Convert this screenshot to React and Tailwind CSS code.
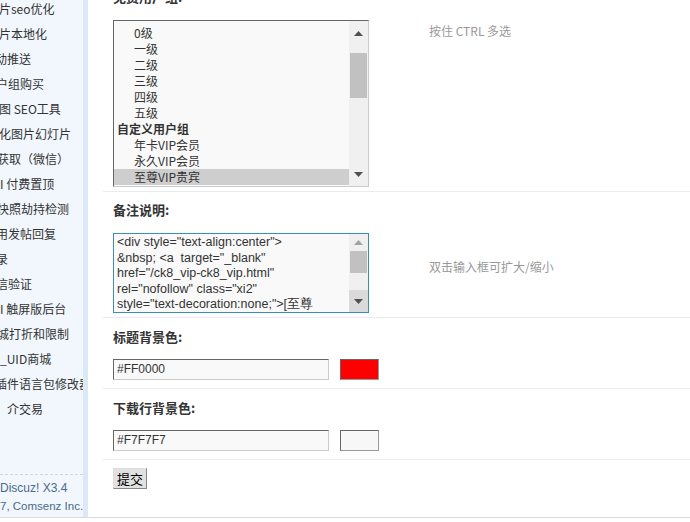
import React from 'react';

const cjk = { fontFamily: '"Noto Sans CJK SC", "Microsoft YaHei", sans-serif' };
const latin = { fontFamily: '"Liberation Sans", Tahoma, Arial, sans-serif' };

const menu = [
  { label: '片seo优化', cls: '-ml-[1px]' },
  { label: '片本地化', cls: '-ml-[1px]' },
  { label: '动推送', cls: '-ml-[5px]' },
  { label: '户组购买', cls: '-ml-[4px]' },
  { label: '图 SEO工具', cls: '-ml-[1px]' },
  { label: '化图片幻灯片', cls: '-ml-[1px]' },
  { label: '获取（微信）', cls: '-ml-[3px]' },
  { label: 'I 付费置顶', cls: 'ml-0' },
  { label: '快照劫持检测', cls: '-ml-[3px]' },
  { label: '用发帖回复', cls: '-ml-[4px]' },
  { label: '录', cls: '-ml-[4px]' },
  { label: '信验证', cls: '-ml-[4px]' },
  { label: 'I 触屏版后台', cls: 'ml-0' },
  { label: '城打折和限制', cls: '-ml-[3px]' },
  { label: '_UID商城', cls: 'ml-0' },
  { label: '插件语言包修改器', cls: '-ml-[5px]' },
  { label: '介交易', cls: 'ml-[7px]' },
];

const levels = ['0级', '一级', '二级', '三级', '四级', '五级'];
const customs = ['年卡VIP会员', '永久VIP会员', '至尊VIP贵宾'];

const noteLines = [
  '<div style="text-align:center">',
  '&nbsp; <a  target="_blank"',
  'href="/ck8_vip-ck8_vip.html"',
  'rel="nofollow" class="xi2"',
  'style="text-decoration:none;">[至尊',
];

const Up = ({ color = '#505050' }) => (
  <svg width="9" height="5" viewBox="0 0 9 5"><path d="M0 5 L4.5 0 L9 5 Z" fill={color} /></svg>
);
const Down = ({ color = '#505050' }) => (
  <svg width="9" height="5" viewBox="0 0 9 5"><path d="M0 0 L9 0 L4.5 5 Z" fill={color} /></svg>
);

const Sidebar = () => (
  <div className="w-[88px] h-full flex shrink-0">
    <div className="w-[83px] h-full bg-[#f1f7fd] flex flex-col overflow-hidden">
      <div className="-mt-[4px]">
        {menu.map((m, i) => (
          <div key={i} className="h-[25px] leading-[25px] text-[12px] text-[#333] whitespace-nowrap" style={cjk}>
            <span className={`inline-block ${m.cls}`}>{m.label}</span>
          </div>
        ))}
      </div>
      <div className="mt-auto mb-[2px] border-t border-dashed border-[#cfd8e0] pt-[4px]">
        <div className="text-[12px] leading-[18px] text-[#4b6a88] whitespace-nowrap" style={latin}>Discuz! X3.4</div>
        <div className="text-[11.5px] leading-[18px] text-[#4b6a88] whitespace-nowrap" style={latin}>7, Comsenz Inc.</div>
      </div>
    </div>
    <div className="w-[5px] h-full bg-[#dbe8f5]" />
  </div>
);

const Label = ({ children, className = '' }) => (
  <div className={`h-[18px] leading-[18px] text-[13px] font-bold text-[#333] ${className}`} style={cjk}>{children}</div>
);

const Hint = ({ children, className = '' }) => (
  <div className={`text-[12px] text-[#999] ${className}`} style={cjk}>{children}</div>
);

const ColorRow = ({ label, value, swatch }) => (
  <div className="border-b border-[#e6edf2] pl-[10px] pt-[10px] pb-[8px]">
    <Label>{label}</Label>
    <div className="flex items-center mt-[13px] gap-[11px]">
      <div className="w-[216px] h-[21px] border border-t-[#666] border-l-[#666] border-r-[#ccc] border-b-[#ccc] bg-[#f9f9f9] px-[3px] text-[12px] leading-[19px] text-[#333]" style={latin}>{value}</div>
      <div className={`w-[39px] h-[21px] border border-t-[#666] border-l-[#666] border-r-[#999] border-b-[#999] ${swatch}`} />
    </div>
  </div>
);

export default function App() {
  return (
    <div className="w-[690px] h-[522px] bg-white overflow-hidden">
      <div className="h-[518px] flex border-b border-[#dcdcdc]">
        <Sidebar />
        <div className="flex-1 pl-[15px] overflow-hidden">
          {/* 免费用户组 */}
          <div className="border-b border-[#e6edf2] pl-[10px] pb-[4px]">
            <Label className="-mt-[12px]">免费用户组:</Label>
            <div className="flex mt-[14px]">
              <div className="w-[256px] h-[167px] border border-t-[#666] border-l-[#666] border-r-[#ccc] border-b-[#ccc] bg-[#f9f9f9] flex overflow-hidden">
                <div className="flex-1 overflow-hidden pt-[4px] text-[12px] text-[#333]" style={cjk}>
                  {levels.map(l => (
                    <div key={l} className="h-[16px] leading-[16px] pl-[20px]">{l}</div>
                  ))}
                  <div className="h-[16px] leading-[16px] pl-[3px] font-bold">自定义用户组</div>
                  {customs.map((c, i) => (
                    <div key={c} className={`h-[16px] leading-[16px] pl-[20px] ${i === 2 ? 'bg-[#cecece]' : ''}`}>{c}</div>
                  ))}
                </div>
                <div className="w-[19px] h-full bg-[#f0f0f0] flex flex-col items-center">
                  <div className="h-[24px] flex items-center justify-center"><Up /></div>
                  <div className="w-[17px] h-[45px] mt-[8px] bg-[#c1c1c1]" />
                  <div className="mt-auto h-[24px] flex items-center justify-center"><Down /></div>
                </div>
              </div>
              <Hint className="ml-[60px] mt-[2px]">按住 CTRL 多选</Hint>
            </div>
          </div>

          {/* 备注说明 */}
          <div className="border-b border-[#e6edf2] pl-[10px] pt-[9px] pb-[4px]">
            <Label>备注说明:</Label>
            <div className="flex mt-[14px]">
              <div className="w-[256px] h-[80px] border border-[#3a8fb5] bg-[#f9f9f9] flex overflow-hidden">
                <div className="flex-1 pl-[3px] pt-[1px] text-[12.5px] text-[#333] overflow-hidden" style={latin}>
                  {noteLines.map((t, i) => (
                    <div key={i} className="h-[15.5px] leading-[15.5px] whitespace-pre">{t}</div>
                  ))}
                </div>
                <div className="w-[19px] h-full bg-[#f0f0f0] flex flex-col items-center">
                  <div className="h-[17px] flex items-center justify-center"><Up color="#a3a3a3" /></div>
                  <div className="w-[17px] h-[22px] bg-[#c1c1c1]" />
                  <div className="mt-auto w-full h-[22px] bg-[#dadada] flex items-center justify-center"><Down /></div>
                </div>
              </div>
              <Hint className="ml-[60px] mt-[25px]">双击输入框可扩大/缩小</Hint>
            </div>
          </div>

          <ColorRow label="标题背景色:" value="#FF0000" swatch="bg-[#ff0000]" />
          <ColorRow label="下载行背景色:" value="#F7F7F7" swatch="bg-[#f7f7f7]" />

          <div className="flex pl-[10px] pt-[8px]">
            <button className="h-[21px] px-[3px] border border-t-[#ddd] border-l-[#ddd] border-r-[#888] border-b-[#888] bg-[#e1e1e1] text-[13px] leading-[19px] text-black" style={cjk}>提交</button>
          </div>
        </div>
      </div>
    </div>
  );
}
